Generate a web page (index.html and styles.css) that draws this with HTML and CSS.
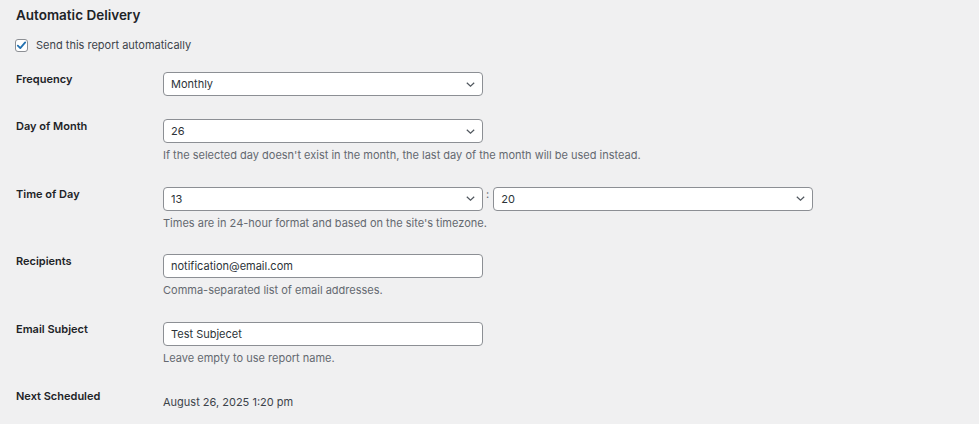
FILE: index.html
```html
<!DOCTYPE html>
<html lang="en">
<head>
<meta charset="utf-8">
<title>Automatic Delivery</title>
<link rel="stylesheet" href="styles.css">
</head>
<body>
<div class="wrap">
  <h2 class="title">Automatic Delivery</h2>
  <label class="auto">
    <span class="checkbox">
      <svg width="11" height="11" viewBox="0 0 11 11"><path d="M1.8 5.6 L4.3 8.1 L9.2 2.4" fill="none" stroke="#2271b1" stroke-width="1.8" stroke-linecap="round" stroke-linejoin="round"/></svg>
    </span>
    <span>Send this report automatically</span>
  </label>

  <div class="form">
    <div class="row">
      <div class="label">Frequency</div>
      <div class="field">
        <div class="select"><span>Monthly</span><svg class="chev" width="9" height="5" viewBox="0 0 9 5"><path d="M0.8 0.8 L4.5 4.2 L8.2 0.8" fill="none" stroke="#50575e" stroke-width="1.2"/></svg></div>
      </div>
    </div>

    <div class="row">
      <div class="label">Day of Month</div>
      <div class="field">
        <div class="select"><span>26</span><svg class="chev" width="9" height="5" viewBox="0 0 9 5"><path d="M0.8 0.8 L4.5 4.2 L8.2 0.8" fill="none" stroke="#50575e" stroke-width="1.2"/></svg></div>
        <p class="desc">If the selected day doesn't exist in the month, the last day of the month will be used instead.</p>
      </div>
    </div>

    <div class="row">
      <div class="label">Time of Day</div>
      <div class="field">
        <div class="time">
          <div class="select"><span>13</span><svg class="chev" width="9" height="5" viewBox="0 0 9 5"><path d="M0.8 0.8 L4.5 4.2 L8.2 0.8" fill="none" stroke="#50575e" stroke-width="1.2"/></svg></div>
          <span class="colon">:</span>
          <div class="select"><span>20</span><svg class="chev" width="9" height="5" viewBox="0 0 9 5"><path d="M0.8 0.8 L4.5 4.2 L8.2 0.8" fill="none" stroke="#50575e" stroke-width="1.2"/></svg></div>
        </div>
        <p class="desc">Times are in 24-hour format and based on the site's timezone.</p>
      </div>
    </div>

    <div class="row">
      <div class="label">Recipients</div>
      <div class="field">
        <div class="input">notification@email.com</div>
        <p class="desc">Comma-separated list of email addresses.</p>
      </div>
    </div>

    <div class="row">
      <div class="label">Email Subject</div>
      <div class="field">
        <div class="input">Test Subjecet</div>
        <p class="desc">Leave empty to use report name.</p>
      </div>
    </div>

    <div class="row">
      <div class="label">Next Scheduled</div>
      <div class="field">
        <div class="value">August 26, 2025 1:20 pm</div>
      </div>
    </div>
  </div>
</div>
</body>
</html>
```
FILE: styles.css
```css
html, body {
  margin: 0;
  padding: 0;
  background: #f0f0f1;
}
body {
  font-family: Inter, "Noto Sans", "Liberation Sans", sans-serif;
  font-size: 11px;
  color: #3c434a;
}
.wrap {
  padding: 0 16px;
}
.title {
  margin: 0;
  padding-top: 6px;
  font-size: 13.5px;
  line-height: 18px;
  font-weight: 600;
  color: #1d2327;
}
.auto {
  display: flex;
  align-items: center;
  gap: 8px;
  margin-top: 14px;
  margin-left: -1px;
  line-height: 14px;
  color: #3c434a;
}
.checkbox {
  width: 13px;
  height: 13px;
  box-sizing: border-box;
  border: 1px solid #8c8f94;
  border-radius: 3px;
  background: #fff;
  display: flex;
  align-items: center;
  justify-content: center;
}
.form {
  margin-top: 8px;
}
.row {
  display: grid;
  grid-template-columns: 147px 1fr;
  padding: 12px 0 11px;
}
.label {
  font-weight: 600;
  line-height: 14px;
  color: #1d2327;
}
.field {
  display: flex;
  flex-direction: column;
  align-items: flex-start;
}
.select, .input {
  width: 320px;
  height: 24px;
  box-sizing: border-box;
  border: 1px solid #8c8f94;
  border-radius: 4px;
  background: #fff;
  padding: 0 7px;
  display: flex;
  align-items: center;
  justify-content: space-between;
  color: #2c3338;
  line-height: 14px;
}
.time {
  display: flex;
  align-items: flex-start;
}
.colon {
  line-height: 14px;
  margin: 0 4px 0 3px;
  color: #646970;
}
.desc {
  margin: 4px 0 0;
  line-height: 16.5px;
  color: #646970;
}
.value {
  padding-top: 6px;
  line-height: 14px;
  color: #3c434a;
}
```
